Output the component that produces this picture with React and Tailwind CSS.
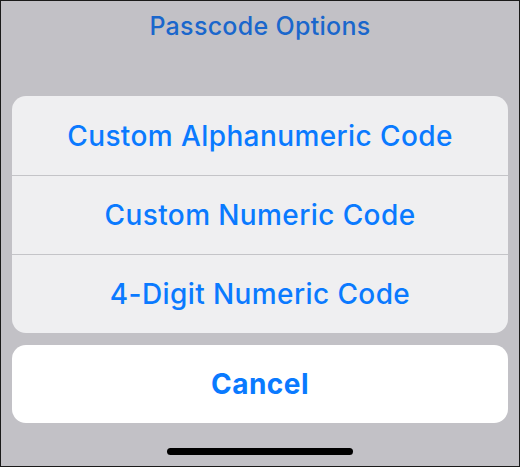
import React from 'react';

const options = ['Custom Alphanumeric Code', 'Custom Numeric Code', '4-Digit Numeric Code'];

export default function App() {
  return (
    <div
      className="w-[520px] h-[467px] bg-[#c2c1c6] border border-[#1a1a1a] flex flex-col overflow-hidden"
      style={{ fontFamily: 'Inter, "Noto Sans", sans-serif' }}
    >
      {/* ── dimmed title behind the sheet ── */}
      <div className="h-[52px] flex items-center justify-center">
        <span className="text-[25px] font-medium text-[#1a67cc] tracking-[0.3px]">Passcode Options</span>
      </div>

      {/* ── action sheet ── */}
      <div className="px-[11px] pt-[43px] flex flex-col gap-3">
        <div className="bg-[#efeff1] rounded-[14px] flex flex-col">
          {options.map((label, i) => (
            <div
              key={label}
              className={`h-[79px] flex items-center justify-center text-[28px] font-medium text-[#0a7aff] tracking-[0.4px] ${
                i > 0 ? 'border-t border-[#c4c4c8]' : ''
              }`}
            >
              {label}
            </div>
          ))}
        </div>
        <div className="bg-white rounded-[14px] h-[78px] flex items-center justify-center text-[28px] font-bold text-[#0a7aff] tracking-[0.5px]">
          Cancel
        </div>
      </div>

      {/* ── home indicator ── */}
      <div className="flex-1 flex items-start justify-center pt-[25px]">
        <div className="w-[186px] h-[7px] rounded-full bg-black" />
      </div>
    </div>
  );
}
